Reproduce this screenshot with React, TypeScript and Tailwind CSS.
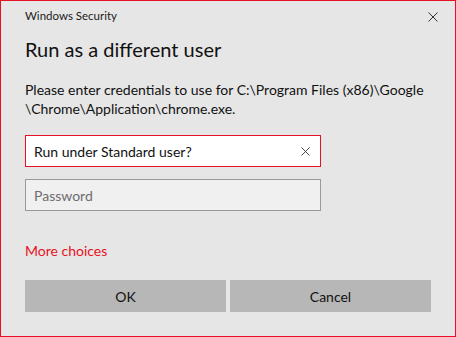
import React from "react";

const CloseIcon: React.FC<{ size: number; className?: string }> = ({ size, className }) => (
  <svg width={size} height={size} viewBox="0 0 10 10" className={className}>
    <path d="M0.5 0.5 L9.5 9.5 M9.5 0.5 L0.5 9.5" stroke="currentColor" strokeWidth="1" fill="none" />
  </svg>
);

const App: React.FC = () => {
  return (
    <div
      className="w-[456px] h-[337px] border border-[#e81123] bg-[#e6e6e6] flex flex-col pl-6 pr-6 text-[#000] overflow-hidden"
      style={{ fontFamily: '"Segoe UI", Lato, sans-serif' }}
    >
      {/* title bar */}
      <div className="flex items-start justify-between pt-[7px]">
        <span className="text-[11.5px] leading-[16px] text-[#1a1a1a]">Windows Security</span>
        <button className="mt-[4px] -mr-[7px] text-[#333]">
          <CloseIcon size={10} />
        </button>
      </div>

      <h1 className="mt-[11px] text-[20px] leading-[28px] text-[#111]">Run as a different user</h1>

      <p className="mt-[17px] text-[14px] leading-[19px] text-[#111] whitespace-nowrap">
        Please enter credentials to use for C:\Program Files (x86)\Google
        <br />
        \Chrome\Application\chrome.exe.
      </p>

      {/* user field */}
      <div className="mt-[17px] w-[296px] h-[32px] border border-[#e81123] bg-white flex items-center pl-[8px] pr-[10px]">
        <span className="flex-1 text-[14px] text-[#111]">Run under Standard user?</span>
        <CloseIcon size={9} className="text-[#333]" />
      </div>

      {/* password field */}
      <div className="mt-[12px] w-[296px] h-[32px] border border-[#999] bg-[#f0f0f0] flex items-center pl-[8px]">
        <span className="text-[14px] text-[#6d6d6d]">Password</span>
      </div>

      <a className="mt-[30px] text-[14px] leading-[20px] text-[#e81123] w-fit">More choices</a>

      <div className="mt-[19px] flex gap-[4px] w-[406px]">
        <button className="flex-1 h-[32px] bg-[#b7b7b7] text-[14px] text-[#111]">OK</button>
        <button className="flex-1 h-[32px] bg-[#b7b7b7] text-[14px] text-[#111]">Cancel</button>
      </div>
    </div>
  );
};

export default App;
